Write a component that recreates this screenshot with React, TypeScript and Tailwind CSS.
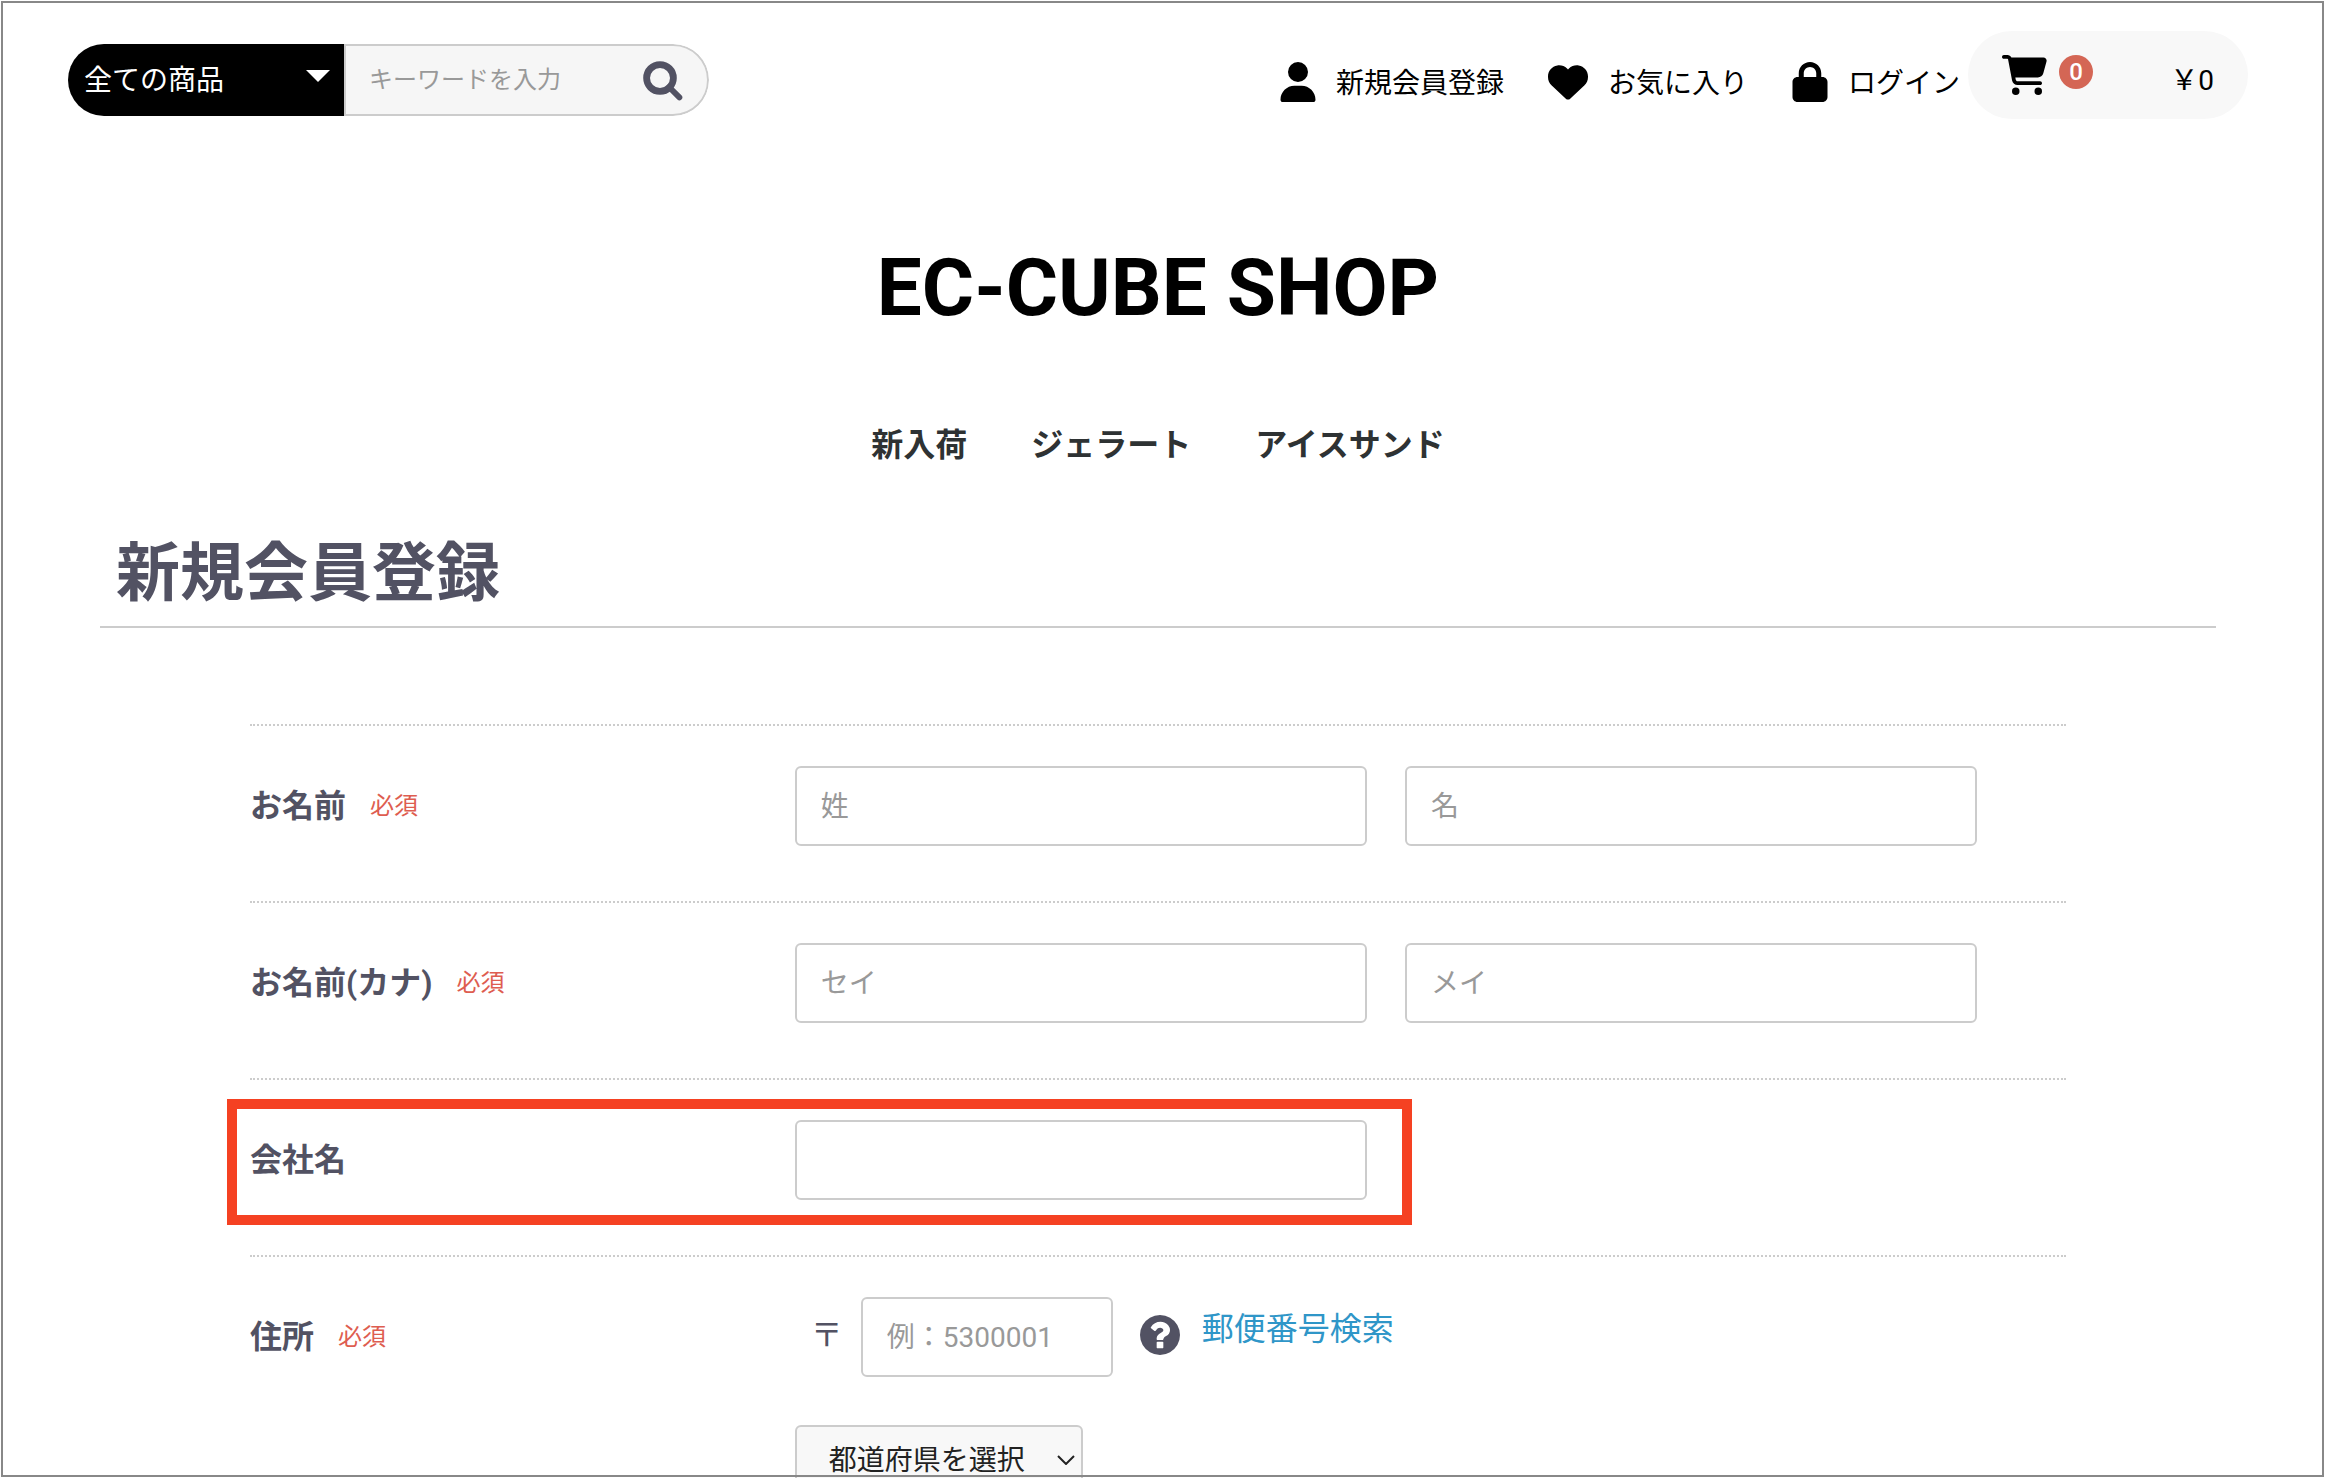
import type { ReactNode } from 'react';
import { FaUser, FaHeart, FaLock, FaCartShopping } from 'react-icons/fa6';

function SearchIcon() {
  return (
    <svg viewBox="0 0 40 40" className="size-10 fill-none stroke-current">
      <circle cx="17" cy="17" r="13.4" strokeWidth="6.8" />
      <path d="M26 26L36.4 36.4" strokeWidth="5.8" strokeLinecap="round" />
    </svg>
  );
}

function QuestionIcon() {
  return (
    <svg viewBox="128 128 1536 1536" className="size-10 fill-current">
      <path
        fillRule="evenodd"
        d="M1024 1376v-192q0-14-9-23t-23-9h-192q-14 0-23 9t-9 23v192q0 14 9 23t23 9h192q14 0 23-9t9-23zM1280 704q0-88-55.5-163t-138.5-116-170-41q-243 0-371 213-15 24 8 42l132 100q7 6 19 6 16 0 25-12 53-68 86-92 34-24 86-24 48 0 85.5 26t37.5 59q0 38-20 61t-68 45q-63 28-115.5 86.5t-52.5 125.5v36q0 14 9 23t23 9h192q14 0 23-9t9-23q0-19 21.5-49.5t54.5-49.5q32-18 49-28.5t46-35 44.5-48 28-60.5 12.5-81zM1664 896q0 209-103 385.5t-279.5 279.5-385.5 103-385.5-103-279.5-279.5-103-385.5 103-385.5 279.5-279.5 385.5-103 385.5 103 279.5 279.5 103 385.5z"
      />
    </svg>
  );
}

function HeaderLink({ icon, label }: { icon: ReactNode; label: string }) {
  return (
    <a href="#" className="flex items-center">
      {icon}
      <span className="ml-5 pt-1">{label}</span>
    </a>
  );
}

function Header() {
  return (
    <header className="flex items-start justify-between px-17 pt-[31px]">
      <form className="mt-[13px] flex h-18 overflow-hidden rounded-full" role="search">
        <div className="relative flex w-69 bg-black">
          <select
            aria-label="商品カテゴリ"
            className="h-full w-full appearance-none bg-black pt-0.5 pl-4 text-[28px] text-white"
          >
            <option>全ての商品</option>
          </select>
          <svg viewBox="0 0 24 12" className="pointer-events-none absolute top-6.5 right-3.5 h-3 w-6 fill-white">
            <path d="M0 0H24L12 12Z" />
          </svg>
        </div>
        <div className="flex w-[365px] items-center rounded-r-full border-2 border-[#ccc] bg-[#f6f6f6]">
          <input
            type="search"
            aria-label="キーワード"
            placeholder="キーワードを入力"
            className="min-w-0 flex-1 bg-transparent pl-[23px] text-2xl outline-none placeholder:text-[#999]"
          />
          <button type="submit" aria-label="検索" className="mt-0.5 mr-6 text-[#525263]">
            <SearchIcon />
          </button>
        </div>
      </form>
      <nav className="flex items-center text-[28px] text-black">
        <div className="flex items-center gap-11 pt-3.5">
          <HeaderLink icon={<FaUser className="h-10 w-9" />} label="新規会員登録" />
          <HeaderLink icon={<FaHeart className="size-10" />} label="お気に入り" />
          <HeaderLink icon={<FaLock className="h-10 w-9" />} label="ログイン" />
        </div>
        <a href="#" className="ml-2 flex h-22 w-70 items-center rounded-full bg-[#f8f8f8] px-8.5">
          <FaCartShopping className="h-10 w-[45px]" />
          <span className="mb-1.5 ml-3 flex size-8.5 items-center justify-center rounded-full bg-[#d46655] text-2xl font-medium text-white">
            0
          </span>
          <span className="mt-3 ml-auto">￥0</span>
        </a>
      </nav>
    </header>
  );
}

function Row({
  label,
  htmlFor,
  required,
  children,
}: {
  label: string;
  htmlFor: string;
  required?: boolean;
  children: ReactNode;
}) {
  return (
    <div className="flex min-h-[177px] items-start border-t-2 border-dotted border-[#ccc] pt-10">
      <div className="flex h-20 w-[30%] items-center">
        <label htmlFor={htmlFor} className="text-[32px] font-bold">
          {label}
        </label>
        {required && <span className="ml-6 text-2xl text-[#de5d50]">必須</span>}
      </div>
      <div className="w-[70%]">{children}</div>
    </div>
  );
}

function Field({ id, label, placeholder }: { id: string; label: string; placeholder?: string }) {
  return (
    <input
      id={id}
      type="text"
      aria-label={label}
      placeholder={placeholder}
      className="mr-[3%] h-20 w-[45%] rounded-md border-2 border-[#ccc] bg-white px-6 text-[28px] placeholder:text-[#999]"
    />
  );
}

export default function App() {
  return (
    <div className="h-screen overflow-hidden bg-white pr-2.5 font-[Roboto,'Noto_Sans_CJK_JP',sans-serif] text-[#525263]">
      <div className="pointer-events-none fixed top-px right-0.5 bottom-px left-px z-10 border-2 border-[#888]" />
      <Header />
      <h1 className="mt-[129px] text-center text-[80px] leading-20 font-bold text-black">
        <a href="#">EC-CUBE SHOP</a>
      </h1>
      <nav className="mt-[99px] flex justify-center gap-16 text-[32px] leading-9 font-bold text-[#2e3233]">
        <a href="#">新入荷</a>
        <a href="#">ジェラート</a>
        <a href="#">アイスサンド</a>
      </nav>
      <main className="mx-25">
        <h2 className="mt-[71px] border-b-2 border-[#ccc] px-4 pb-3 text-[64px] leading-20 font-bold">新規会員登録</h2>
        <form className="mx-[150px] mt-24">
          <Row label="お名前" htmlFor="name01" required>
            <div className="flex">
              <Field id="name01" label="姓" placeholder="姓" />
              <Field id="name02" label="名" placeholder="名" />
            </div>
          </Row>
          <Row label="お名前(カナ)" htmlFor="kana01" required>
            <div className="flex">
              <Field id="kana01" label="セイ" placeholder="セイ" />
              <Field id="kana02" label="メイ" placeholder="メイ" />
            </div>
          </Row>
          <div className="relative">
            <Row label="会社名" htmlFor="company">
              <div className="flex">
                <Field id="company" label="会社名" />
              </div>
            </Row>
            <div className="pointer-events-none absolute top-[21px] right-[36%] -left-[23px] h-[126px] border-10 border-[#f54122]" />
          </div>
          <Row label="住所" htmlFor="postal" required>
            <div className="flex items-center">
              <span className="mb-1 ml-4 w-[50px] text-[32px]">〒</span>
              <input
                id="postal"
                type="text"
                placeholder="例：5300001"
                className="h-20 w-[252px] rounded-md border-2 border-[#ccc] px-6 text-[28px] placeholder:text-[#999]"
              />
              <a href="#" aria-label="郵便番号について" className="mb-1 ml-[27px]">
                <QuestionIcon />
              </a>
              <a href="#" className="mb-4 ml-[22px] text-[32px] leading-9 text-[#2f96c8]">
                郵便番号検索
              </a>
            </div>
            <div className="relative mt-12 w-[288px]">
              <select
                aria-label="都道府県"
                className="h-18 w-full appearance-none rounded-md border-2 border-[#ccc] bg-[#f8f8f8] pl-8 text-[28px] text-[#222]"
              >
                <option>都道府県を選択</option>
              </select>
              <svg
                viewBox="0 0 18 10"
                className="pointer-events-none absolute top-7.5 right-2 h-2.5 w-4.5 fill-none stroke-[#222] stroke-2"
              >
                <path d="M1 1L9 9L17 1" />
              </svg>
            </div>
          </Row>
        </form>
      </main>
    </div>
  );
}
